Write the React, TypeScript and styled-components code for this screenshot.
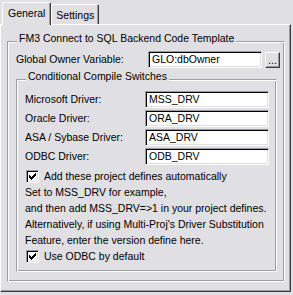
import { Fragment } from "react";
import styled, { createGlobalStyle } from "styled-components";

const FACE = "#e0dfe3";
const SHADOW = "#9d9da1";
const DARK = "#3c3c3c";

const GlobalStyle = createGlobalStyle`
    html, body {
        margin: 0;
        padding: 0;
        background: ${FACE};
    }
    body {
        font-family: "Liberation Sans", Arial, sans-serif;
        font-size: 10.5px;
        color: #000;
    }
`;

const Dialog = styled.div`
    width: 293px;
    height: 295px;
    padding-top: 2px;
    box-sizing: border-box;
    background: ${FACE};
`;

const TabStrip = styled.div`
    display: flex;
    align-items: flex-end;
    height: 22px;
    padding-left: 2px;
`;

const Tab = styled.div<{ $active?: boolean }>`
    position: relative;
    z-index: ${(p) => (p.$active ? 1 : 0)};
    box-sizing: border-box;
    height: ${(p) => (p.$active ? "23px" : "20px")};
    margin-bottom: ${(p) => (p.$active ? "-1px" : "0")};
    padding: 4px ${(p) => (p.$active ? "5px" : "4px")} 0;
    line-height: 13px;
    background: ${FACE};
    border-top: 1px solid #fff;
    border-left: 1px solid #fff;
    border-right: 1px solid ${DARK};
    border-radius: 2px 2px 0 0;
    box-shadow: inset -1px 0 0 ${SHADOW};
    white-space: nowrap;
`;

const Panel = styled.div`
    box-sizing: border-box;
    width: 291px;
    height: 268px;
    padding: 16px 5px 9px 6px;
    border-top: 1px solid #fff;
    border-left: 1px solid #fff;
    border-right: 1px solid ${DARK};
    border-bottom: 1px solid ${DARK};
    box-shadow: inset -1px -1px 0 ${SHADOW};
`;

const GroupBox = styled.div<{ $width: number }>`
    position: relative;
    box-sizing: border-box;
    width: ${(p) => p.$width}px;
    border: 1px solid;
    border-color: ${SHADOW} #fff #fff ${SHADOW};
    box-shadow: inset 1px 1px 0 #fff, inset -1px -1px 0 ${SHADOW};
`;

const OuterGroup = styled(GroupBox)`
    padding: 9px 7px 9px 8px;
`;

const InnerGroup = styled(GroupBox)`
    margin-top: 11px;
    padding: 11px 7px 7px 8px;
`;

const Legend = styled.span`
    position: absolute;
    top: -10px;
    left: 9px;
    padding: 0 2px;
    line-height: 13px;
    background: ${FACE};
    white-space: nowrap;
`;

const OwnerRow = styled.div`
    display: grid;
    grid-template-columns: 129px 114px 15px;
    column-gap: 3px;
    align-items: center;
    height: 17px;
`;

const DriverGrid = styled.div`
    display: grid;
    grid-template-columns: 120px 124px;
    grid-auto-rows: 17px;
    row-gap: 2px;
    align-items: center;
`;

const Label = styled.span`
    line-height: 13px;
    white-space: nowrap;
`;

const Field = styled.div`
    box-sizing: border-box;
    height: 17px;
    padding: 1px 0 0 3px;
    line-height: 13px;
    background: #fff;
    border: 1px solid;
    border-color: ${SHADOW} #fff #fff ${SHADOW};
    box-shadow: inset 1px 1px 0 #000, inset -1px -1px 0 ${FACE};
    white-space: nowrap;
    overflow: hidden;
`;

const BrowseButton = styled.div`
    box-sizing: border-box;
    height: 16px;
    display: flex;
    align-items: flex-end;
    justify-content: center;
    padding-bottom: 2px;
    line-height: 10px;
    background: ${FACE};
    border: 1px solid;
    border-color: #fff ${DARK} ${DARK} #fff;
    box-shadow: inset -1px -1px 0 ${SHADOW};
`;

const Notes = styled.div`
    margin-top: 3px;
    line-height: 16px;
`;

const CheckRow = styled.div`
    display: flex;
    align-items: center;
    height: 16px;
    gap: 5px;
`;

const CheckBox = styled.span`
    box-sizing: border-box;
    flex: none;
    width: 13px;
    height: 13px;
    margin-left: 1px;
    background: #fff;
    border: 1px solid;
    border-color: ${SHADOW} #fff #fff ${SHADOW};
    box-shadow: inset 1px 1px 0 #000, inset -1px -1px 0 ${FACE};
    display: flex;
`;

const TICK_TOPS = [4, 5, 6, 5, 4, 3, 2];

const Check = () => (
    <CheckBox>
        <svg width="11" height="11" viewBox="0 0 11 11" shapeRendering="crispEdges">
            {TICK_TOPS.map((y, i) => (
                <rect key={i} x={2 + i} y={y} width="1" height="3" fill="#000" />
            ))}
        </svg>
    </CheckBox>
);

const drivers = [
    { label: "Microsoft Driver:", value: "MSS_DRV" },
    { label: "Oracle Driver:", value: "ORA_DRV" },
    { label: "ASA / Sybase Driver:", value: "ASA_DRV" },
    { label: "ODBC Driver:", value: "ODB_DRV" },
];

const App = () => (
    <>
        <GlobalStyle />
        <Dialog>
            <TabStrip>
                <Tab $active>General</Tab>
                <Tab>Settings</Tab>
            </TabStrip>
            <Panel>
                <OuterGroup $width={278}>
                    <Legend>FM3 Connect to SQL Backend Code Template</Legend>
                    <OwnerRow>
                        <Label>Global Owner Variable:</Label>
                        <Field>GLO:dbOwner</Field>
                        <BrowseButton>...</BrowseButton>
                    </OwnerRow>
                    <InnerGroup $width={261}>
                        <Legend>Conditional Compile Switches</Legend>
                        <DriverGrid>
                            {drivers.map((d) => (
                                <Fragment key={d.value}>
                                    <Label>{d.label}</Label>
                                    <Field>{d.value}</Field>
                                </Fragment>
                            ))}
                        </DriverGrid>
                        <Notes>
                            <CheckRow>
                                <Check />
                                <span>Add these project defines automatically</span>
                            </CheckRow>
                            <div>Set to MSS_DRV for example,</div>
                            <div>and then add MSS_DRV=&gt;1 in your project defines.</div>
                            <div>Alternatively, if using Multi-Proj's Driver Substitution</div>
                            <div>Feature, enter the version define here.</div>
                            <CheckRow>
                                <Check />
                                <span>Use ODBC by default</span>
                            </CheckRow>
                        </Notes>
                    </InnerGroup>
                </OuterGroup>
            </Panel>
        </Dialog>
    </>
);

export default App;
